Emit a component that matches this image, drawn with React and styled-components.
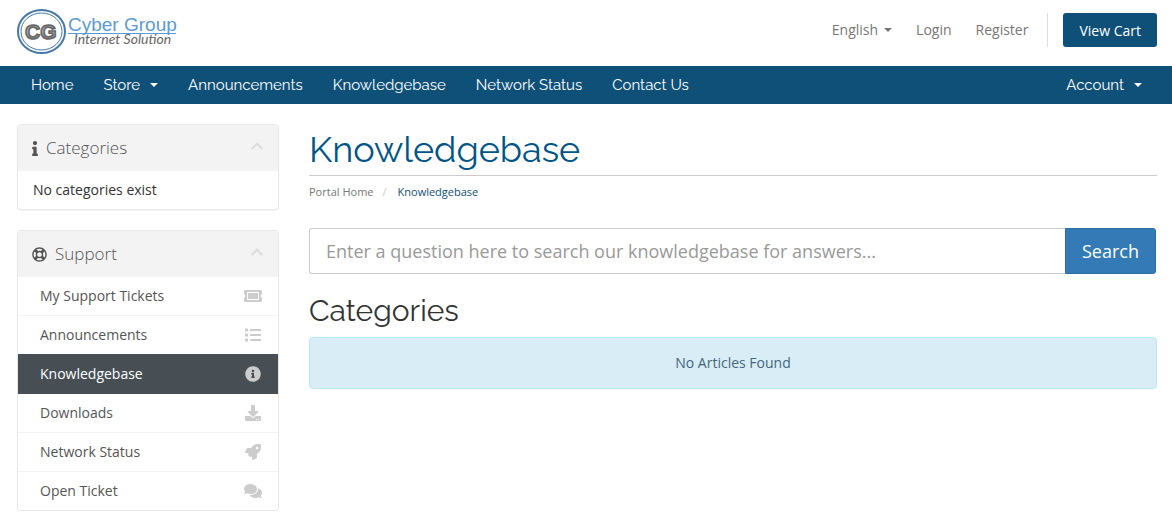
import React from "react";
import styled, { createGlobalStyle, css } from "styled-components";
import {
  FaInfo,
  FaRegLifeRing,
  FaTicketAlt,
  FaList,
  FaInfoCircle,
  FaDownload,
  FaRocket,
  FaComments,
  FaChevronUp,
} from "react-icons/fa";

const body = `"Open Sans", "Noto Sans", sans-serif`;
const display = `Raleway, Lato, sans-serif`;
const navy = "#0f5079";

const Global = createGlobalStyle`
  *, *::before, *::after { box-sizing: border-box; }
  body { margin: 0; background: #fff; color: #333; font: 14px/20px ${body}; }
  a { text-decoration: none; color: inherit; }
  button, input { font-family: inherit; }
`;

const Header = styled.header`
  display: flex;
  justify-content: space-between;
  align-items: flex-start;
  height: 66px;
  padding: 8px 15px 0 16px;
`;
const LogoLink = styled.a`
  display: block;
  svg { display: block; }
`;
const TopLinks = styled.div`
  display: flex;
  align-items: center;
  gap: 24px;
  margin-top: 5px;
  color: #777;
`;
const PlainButton = styled.button`
  display: flex;
  align-items: center;
  gap: 6px;
  padding: 0;
  border: 0;
  background: none;
  color: inherit;
  font-size: 14px;
  line-height: 20px;
  cursor: pointer;
`;
const Caret = styled.span`
  border: 4px solid transparent;
  border-top-color: currentColor;
  border-bottom: 0;
`;
const CartArea = styled.div`
  margin-left: -5px;
  padding-left: 15px;
  border-left: 1px solid #ddd;
`;
const CartButton = styled.button`
  display: block;
  height: 34px;
  padding: 0 16px;
  border: 0;
  border-radius: 3px;
  background: ${navy};
  color: #fff;
  font-size: 14px;
  cursor: pointer;
`;

const Nav = styled.nav`
  display: flex;
  align-items: center;
  gap: 30px;
  height: 38px;
  padding: 0 30px 0 31px;
  background: ${navy};
  color: #fff;
  font-family: ${display};
  font-size: 15px;
`;
const NavButton = styled(PlainButton)`
  gap: 10px;
  font-size: 15px;
  margin-left: ${(p) => (p.$end ? "auto" : "0")};
`;

const Page = styled.div`
  display: flex;
  gap: 30px;
  padding: 20px 15px 0 17px;
`;
const Sidebar = styled.aside`
  flex: 0 0 262px;
  display: flex;
  flex-direction: column;
  gap: 20px;
`;
const Panel = styled.section`
  border: 1px solid #e8e8e8;
  border-radius: 4px;
  box-shadow: 0 1px 1px rgba(0, 0, 0, 0.05);
  overflow: hidden;
`;
const PanelHeading = styled.h3`
  display: flex;
  align-items: center;
  gap: 8px;
  height: 46px;
  margin: 0;
  padding: 0 14px;
  background: #f3f3f3;
  color: #555;
  font-size: 17px;
  font-weight: 300;
  svg { flex: none; }
`;
const NarrowInfo = styled(FaInfo)`
  width: 6px;
  height: 15px;
`;
const Collapse = styled.button`
  display: flex;
  margin-left: auto;
  padding: 0 0 4px;
  border: 0;
  background: none;
  color: #ddd;
  cursor: pointer;
`;
const PanelBody = styled.p`
  margin: 0;
  padding: 9px 15px;
`;
const Menu = styled.ul`
  margin: 0;
  padding: 0;
  list-style: none;
`;
const MenuItem = styled.li`
  border-bottom: 1px solid #f3f3f3;
  &:last-child { border-bottom: 0; }
  ${(p) =>
    p.$active &&
    css`
      margin-top: -1px;
      padding-top: 1px;
      border-color: #474f54;
      background: #474f54;
    `}
`;
const MenuLink = styled.a`
  display: flex;
  align-items: center;
  justify-content: space-between;
  padding: 9px 15px 9px 22px;
  color: ${(p) => (p.$active ? "#fff" : "#555")};
`;
const IconSlot = styled.span`
  display: flex;
  justify-content: center;
  width: 20px;
  color: #ccc;
`;

const Main = styled.main`
  flex: 1;
  min-width: 0;
`;
const Title = styled.h1`
  margin: 0;
  padding: 6px 0;
  border-bottom: 1px solid #ccc;
  color: #058;
  font: 400 36px/39px ${display};
`;
const Crumbs = styled.ol`
  display: flex;
  margin: 0 0 28px;
  padding: 8px 0 0;
  list-style: none;
  color: #777;
  font-size: 11px;
  line-height: 16px;
`;
const Crumb = styled.li`
  color: ${(p) => (p.$current ? navy : "#777")};
  &:not(:first-child)::before {
    content: "/";
    padding: 0 11px 0 9px;
    color: #ccc;
  }
`;
const SearchForm = styled.form`
  display: flex;
  height: 46px;
  margin-right: 1px;
`;
const SearchInput = styled.input`
  flex: 1;
  min-width: 0;
  padding: 0 16px;
  border: 1px solid #ccc;
  border-right: 0;
  border-radius: 3px 0 0 3px;
  font-size: 18px;
  &::placeholder { color: #999; opacity: 1; }
`;
const SearchButton = styled.button`
  padding: 0 16px;
  border: 1px solid #2e6da4;
  border-radius: 0 3px 3px 0;
  background: #337ab7;
  color: #fff;
  font-size: 18px;
  cursor: pointer;
`;
const Subtitle = styled.h2`
  margin: 20px 0 10px;
  color: #333;
  font: 400 30px/33px ${display};
`;
const Notice = styled.div`
  padding: 15px;
  border: 1px solid #bce8f1;
  border-radius: 4px;
  background: #d9edf7;
  color: #45667a;
  text-align: center;
`;

const Logo = () => (
  <svg width="166" height="48" viewBox="0 0 166 48" role="img" aria-label="Cyber Group Internet Solution">
    <defs>
      <linearGradient id="steel" x1="0" y1="0" x2="0" y2="1">
        <stop offset="0" stopColor="#777" />
        <stop offset="0.5" stopColor="#aaa" />
        <stop offset="1" stopColor="#666" />
      </linearGradient>
    </defs>
    <ellipse cx="25.5" cy="23.5" rx="23.5" ry="21.5" fill="#fff" stroke="#4678a8" strokeWidth="2" />
    <ellipse cx="25.5" cy="23.5" rx="20.5" ry="18.5" fill="none" stroke="#4678a8" />
    <text x="9" y="31" fontFamily="Liberation Sans, sans-serif" fontWeight="700" fontSize="21" fill="url(#steel)" stroke="#666" strokeWidth="1.5">CG</text>
    <text x="52" y="23" fontFamily="Liberation Sans, sans-serif" fontSize="19" fill="#5b9bd5">Cyber Group</text>
    <path d="M52 25.5H160" stroke="#5b9bd5" />
    <text x="58" y="36" fontFamily="Lato, sans-serif" fontStyle="italic" fontSize="14" fill="#666">Internet Solution</text>
  </svg>
);

const links = [
  ["My Support Tickets", FaTicketAlt, 18],
  ["Announcements", FaList, 16],
  ["Knowledgebase", FaInfoCircle, 16],
  ["Downloads", FaDownload, 16],
  ["Network Status", FaRocket, 16],
  ["Open Ticket", FaComments, 18],
];

const PanelTop = ({ icon, children }) => (
  <PanelHeading>
    {icon}
    {children}
    <Collapse type="button" aria-label={`Collapse ${children}`}>
      <FaChevronUp size={14} />
    </Collapse>
  </PanelHeading>
);

export default function App() {
  return (
    <>
      <Global />
      <Header>
        <LogoLink href="#"><Logo /></LogoLink>
        <TopLinks>
          <PlainButton type="button">English <Caret /></PlainButton>
          <a href="#">Login</a>
          <a href="#">Register</a>
          <CartArea><CartButton type="button">View Cart</CartButton></CartArea>
        </TopLinks>
      </Header>
      <Nav>
        <a href="#">Home</a>
        <NavButton type="button">Store <Caret /></NavButton>
        <a href="#">Announcements</a>
        <a href="#">Knowledgebase</a>
        <a href="#">Network Status</a>
        <a href="#">Contact Us</a>
        <NavButton type="button" $end>Account <Caret /></NavButton>
      </Nav>
      <Page>
        <Sidebar>
          <Panel>
            <PanelTop icon={<NarrowInfo />}>Categories</PanelTop>
            <PanelBody>No categories exist</PanelBody>
          </Panel>
          <Panel>
            <PanelTop icon={<FaRegLifeRing size={15} />}>Support</PanelTop>
            <Menu>
              {links.map(([label, Icon, size]) => {
                const active = label === "Knowledgebase";
                return (
                  <MenuItem key={label} $active={active}>
                    <MenuLink href="#" $active={active} aria-current={active ? "page" : undefined}>
                      {label}
                      <IconSlot><Icon size={size} /></IconSlot>
                    </MenuLink>
                  </MenuItem>
                );
              })}
            </Menu>
          </Panel>
        </Sidebar>
        <Main>
          <Title>Knowledgebase</Title>
          <Crumbs>
            <Crumb><a href="#">Portal Home</a></Crumb>
            <Crumb $current>Knowledgebase</Crumb>
          </Crumbs>
          <SearchForm>
            <SearchInput aria-label="Search the knowledgebase" placeholder="Enter a question here to search our knowledgebase for answers..." />
            <SearchButton type="button">Search</SearchButton>
          </SearchForm>
          <Subtitle>Categories</Subtitle>
          <Notice>No Articles Found</Notice>
        </Main>
      </Page>
    </>
  );
}
